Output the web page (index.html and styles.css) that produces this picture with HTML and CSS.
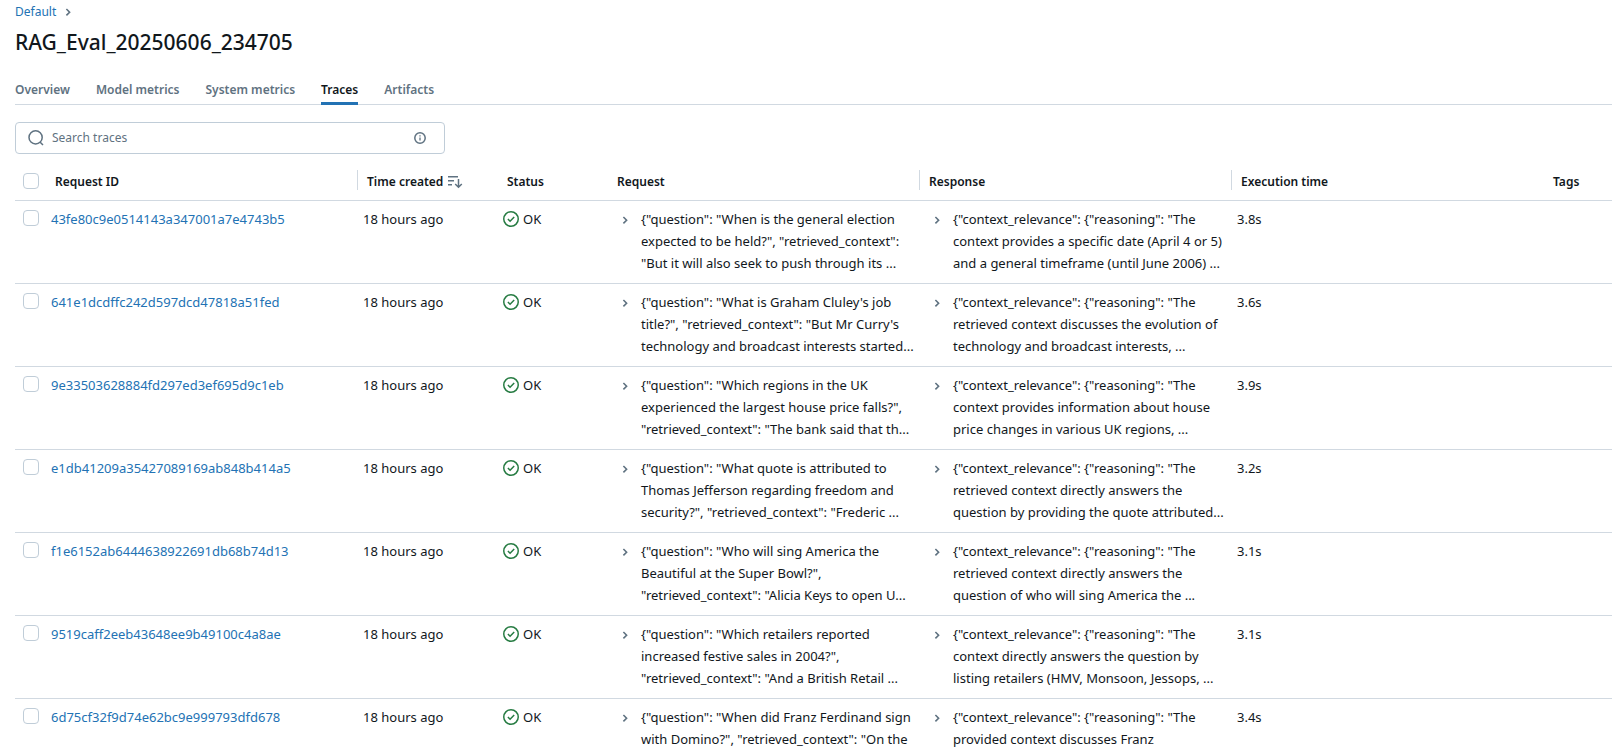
FILE: index.html
```html
<!DOCTYPE html>
<html lang="en">
<head>
<meta charset="utf-8">
<title>RAG_Eval_20250606_234705</title>
<link rel="stylesheet" href="styles.css">
</head>
<body>
<svg class="sprite" aria-hidden="true">
  <symbol id="chevron" viewBox="0 0 16 16"><path d="M6.4 5 9.6 8.2 6.4 11.4" fill="none" stroke="currentColor" stroke-width="1.6"/></symbol>
  <symbol id="check" viewBox="0 0 16 16"><circle cx="8" cy="8" r="7.25" fill="none" stroke="currentColor" stroke-width="1.5"/><path d="M4.9 8 7.1 10.2 11.2 6" fill="none" stroke="currentColor" stroke-width="1.5"/></symbol>
</svg>
<main class="page">
  <nav class="crumbs" aria-label="Breadcrumb">
    <a href="#">Default</a>
    <svg class="crumb-icon"><use href="#chevron"/></svg>
  </nav>
  <h1 class="title">RAG_Eval_20250606_234705</h1>
  <nav class="tabs" aria-label="Run sections">
    <a class="tab" href="#">Overview</a>
    <a class="tab" href="#">Model metrics</a>
    <a class="tab" href="#">System metrics</a>
    <a class="tab tab-active" href="#" aria-current="page">Traces</a>
    <a class="tab" href="#">Artifacts</a>
  </nav>
  <div class="search">
    <svg class="search-icon" viewBox="0 0 16 16"><circle cx="7.6" cy="7.4" r="6.6" fill="none" stroke="currentColor" stroke-width="1.5"/><path d="m12 12 3 3" stroke="currentColor" stroke-width="1.5"/></svg>
    <input class="search-input" type="text" placeholder="Search traces" aria-label="Search traces">
    <button class="icon-button" type="button" aria-label="Search help"><svg class="info-icon" viewBox="0 0 12 12"><circle cx="6" cy="6" r="5.2" fill="none" stroke="currentColor" stroke-width="1.5"/><path d="M6 5.4v3.2M6 3.2v1.3" stroke="currentColor" stroke-width="1.3"/></svg></button>
  </div>
  <table class="traces">
    <colgroup><col class="c-check"><col class="c-wide"><col class="c-time"><col class="c-status"><col class="c-wide"><col class="c-wide"><col class="c-wide"><col></colgroup>
    <thead>
      <tr>
        <th><input class="box" type="checkbox" aria-label="Select all"></th>
        <th class="resizable">Request ID</th>
        <th><button class="sort" type="button">Time created <svg class="sort-icon" viewBox="0 0 16 14"><path d="M1 1.8h10M1 5.8h6M1 9.8h4M11.5 4v8M8.2 9l3.3 3.3L14.8 9" fill="none" stroke="currentColor" stroke-width="1.5"/></svg></button></th>
        <th>Status</th>
        <th class="resizable">Request</th>
        <th class="resizable">Response</th>
        <th>Execution time</th>
        <th>Tags</th>
      </tr>
    </thead>
    <tbody>
      <tr>
        <td><input class="box" type="checkbox" aria-label="Select trace"></td>
        <td><a href="#">43fe80c9e0514143a347001a7e4743b5</a></td>
        <td>18 hours ago</td>
        <td><span class="status"><svg class="status-icon"><use href="#check"/></svg>OK</span></td>
        <td><div class="preview"><button class="expand" type="button" aria-label="Expand request"><svg class="expand-icon"><use href="#chevron"/></svg></button><span>{"question": "When is the general election<br>expected to be held?", "retrieved_context":<br>"But it will also seek to push through its ...</span></div></td>
        <td><div class="preview"><button class="expand" type="button" aria-label="Expand response"><svg class="expand-icon"><use href="#chevron"/></svg></button><span>{"context_relevance": {"reasoning": "The<br>context provides a specific date (April 4 or 5)<br>and a general timeframe (until June 2006) ...</span></div></td>
        <td>3.8s</td>
        <td></td>
      </tr>
      <tr>
        <td><input class="box" type="checkbox" aria-label="Select trace"></td>
        <td><a href="#">641e1dcdffc242d597dcd47818a51fed</a></td>
        <td>18 hours ago</td>
        <td><span class="status"><svg class="status-icon"><use href="#check"/></svg>OK</span></td>
        <td><div class="preview"><button class="expand" type="button" aria-label="Expand request"><svg class="expand-icon"><use href="#chevron"/></svg></button><span>{"question": "What is Graham Cluley's job<br>title?", "retrieved_context": "But Mr Curry's<br>technology and broadcast interests started...</span></div></td>
        <td><div class="preview"><button class="expand" type="button" aria-label="Expand response"><svg class="expand-icon"><use href="#chevron"/></svg></button><span>{"context_relevance": {"reasoning": "The<br>retrieved context discusses the evolution of<br>technology and broadcast interests, ...</span></div></td>
        <td>3.6s</td>
        <td></td>
      </tr>
      <tr>
        <td><input class="box" type="checkbox" aria-label="Select trace"></td>
        <td><a href="#">9e33503628884fd297ed3ef695d9c1eb</a></td>
        <td>18 hours ago</td>
        <td><span class="status"><svg class="status-icon"><use href="#check"/></svg>OK</span></td>
        <td><div class="preview"><button class="expand" type="button" aria-label="Expand request"><svg class="expand-icon"><use href="#chevron"/></svg></button><span>{"question": "Which regions in the UK<br>experienced the largest house price falls?",<br>"retrieved_context": "The bank said that th...</span></div></td>
        <td><div class="preview"><button class="expand" type="button" aria-label="Expand response"><svg class="expand-icon"><use href="#chevron"/></svg></button><span>{"context_relevance": {"reasoning": "The<br>context provides information about house<br>price changes in various UK regions, ...</span></div></td>
        <td>3.9s</td>
        <td></td>
      </tr>
      <tr>
        <td><input class="box" type="checkbox" aria-label="Select trace"></td>
        <td><a href="#">e1db41209a35427089169ab848b414a5</a></td>
        <td>18 hours ago</td>
        <td><span class="status"><svg class="status-icon"><use href="#check"/></svg>OK</span></td>
        <td><div class="preview"><button class="expand" type="button" aria-label="Expand request"><svg class="expand-icon"><use href="#chevron"/></svg></button><span>{"question": "What quote is attributed to<br>Thomas Jefferson regarding freedom and<br>security?", "retrieved_context": "Frederic ...</span></div></td>
        <td><div class="preview"><button class="expand" type="button" aria-label="Expand response"><svg class="expand-icon"><use href="#chevron"/></svg></button><span>{"context_relevance": {"reasoning": "The<br>retrieved context directly answers the<br>question by providing the quote attributed...</span></div></td>
        <td>3.2s</td>
        <td></td>
      </tr>
      <tr>
        <td><input class="box" type="checkbox" aria-label="Select trace"></td>
        <td><a href="#">f1e6152ab6444638922691db68b74d13</a></td>
        <td>18 hours ago</td>
        <td><span class="status"><svg class="status-icon"><use href="#check"/></svg>OK</span></td>
        <td><div class="preview"><button class="expand" type="button" aria-label="Expand request"><svg class="expand-icon"><use href="#chevron"/></svg></button><span>{"question": "Who will sing America the<br>Beautiful at the Super Bowl?",<br>"retrieved_context": "Alicia Keys to open U...</span></div></td>
        <td><div class="preview"><button class="expand" type="button" aria-label="Expand response"><svg class="expand-icon"><use href="#chevron"/></svg></button><span>{"context_relevance": {"reasoning": "The<br>retrieved context directly answers the<br>question of who will sing America the ...</span></div></td>
        <td>3.1s</td>
        <td></td>
      </tr>
      <tr>
        <td><input class="box" type="checkbox" aria-label="Select trace"></td>
        <td><a href="#">9519caff2eeb43648ee9b49100c4a8ae</a></td>
        <td>18 hours ago</td>
        <td><span class="status"><svg class="status-icon"><use href="#check"/></svg>OK</span></td>
        <td><div class="preview"><button class="expand" type="button" aria-label="Expand request"><svg class="expand-icon"><use href="#chevron"/></svg></button><span>{"question": "Which retailers reported<br>increased festive sales in 2004?",<br>"retrieved_context": "And a British Retail ...</span></div></td>
        <td><div class="preview"><button class="expand" type="button" aria-label="Expand response"><svg class="expand-icon"><use href="#chevron"/></svg></button><span>{"context_relevance": {"reasoning": "The<br>context directly answers the question by<br>listing retailers (HMV, Monsoon, Jessops, ...</span></div></td>
        <td>3.1s</td>
        <td></td>
      </tr>
      <tr class="last">
        <td><input class="box" type="checkbox" aria-label="Select trace"></td>
        <td><a href="#">6d75cf32f9d74e62bc9e999793dfd678</a></td>
        <td>18 hours ago</td>
        <td><span class="status"><svg class="status-icon"><use href="#check"/></svg>OK</span></td>
        <td><div class="preview"><button class="expand" type="button" aria-label="Expand request"><svg class="expand-icon"><use href="#chevron"/></svg></button><span>{"question": "When did Franz Ferdinand sign<br>with Domino?", "retrieved_context": "On the</span></div></td>
        <td><div class="preview"><button class="expand" type="button" aria-label="Expand response"><svg class="expand-icon"><use href="#chevron"/></svg></button><span>{"context_relevance": {"reasoning": "The<br>provided context discusses Franz</span></div></td>
        <td>3.4s</td>
        <td></td>
      </tr>
    </tbody>
  </table>
</main>
</body>
</html>
```
FILE: styles.css
```css
* { box-sizing: border-box; }

body {
  margin: 0;
  overflow: hidden;
  background: #fff;
  color: #11171c;
  font: 13px/22px "Noto Sans", "Open Sans", sans-serif;
}

a { color: #2272b4; text-decoration: none; }

button {
  padding: 0;
  border: 0;
  background: none;
  color: inherit;
  font: inherit;
}

.sprite { display: none; }

.page { padding-left: 15px; }

.crumbs {
  display: flex;
  align-items: center;
  gap: 4px;
  height: 24px;
  font-size: 12px;
}

.crumb-icon { width: 16px; height: 16px; color: #5f7281; }

.title {
  margin: 4px 0 0;
  font-size: 21px;
  line-height: 28px;
  font-weight: 500;
}

.tabs {
  display: flex;
  gap: 26px;
  margin-top: 20px;
  border-bottom: 1px solid #d1d9e1;
}

.tab {
  padding: 3px 0 1px;
  margin-bottom: -1px;
  color: #5f7281;
  font-size: 12px;
  font-weight: 600;
  border-bottom: 3px solid transparent;
}

.tab-active { color: #11171c; border-bottom-color: #2272b4; }

.search {
  display: flex;
  align-items: center;
  gap: 8px;
  width: 430px;
  height: 32px;
  margin-top: 17px;
  padding: 0 18px 0 12px;
  border: 1px solid #c0cdd8;
  border-radius: 4px;
  color: #5f7281;
}

.search-icon { width: 16px; height: 16px; }

.search-input {
  flex: 1;
  min-width: 0;
  padding: 0;
  border: 0;
  outline: 0;
  background: none;
  color: #11171c;
  font: inherit;
  font-size: 12px;
}

.search-input::placeholder { color: #5f7281; opacity: 1; }

.icon-button { display: flex; }
.info-icon { width: 12px; height: 12px; }

.traces {
  width: 100%;
  margin-top: 8px;
  table-layout: fixed;
  border-collapse: separate;
  border-spacing: 0;
  white-space: nowrap;
}

.c-check { width: 32px; }
.c-wide { width: 312px; }
.c-time { width: 140px; }
.c-status { width: 110px; }

th, td {
  padding: 7px 4px 9px;
  border-bottom: 1px solid #d1d9e1;
  text-align: left;
  vertical-align: top;
}

th {
  padding: 9px 8px 7px;
  font-size: 12px;
  font-weight: 600;
}

th:first-child, td:first-child { padding-left: 8px; padding-right: 8px; }

.resizable {
  background: linear-gradient(#d1d9e1, #d1d9e1) right 1px top 8px / 1px 20px no-repeat;
}

.last td { border-bottom: 0; }

.box {
  display: block;
  appearance: none;
  width: 16px;
  height: 16px;
  margin: 2px 0 0;
  border: 1px solid #c0cdd8;
  border-radius: 4px;
  background: #fff;
}

.sort { display: flex; align-items: center; gap: 4px; }
.sort-icon { width: 16px; height: 14px; color: #5f7281; }

.status { display: flex; align-items: center; gap: 4px; }
.status-icon { width: 16px; height: 16px; color: #277c43; }

.preview { display: flex; align-items: flex-start; gap: 8px; }

.expand {
  display: flex;
  flex: none;
  justify-content: flex-end;
  align-items: center;
  width: 20px;
  height: 24px;
  color: #5f7281;
}

.expand-icon { width: 16px; height: 16px; }
```
